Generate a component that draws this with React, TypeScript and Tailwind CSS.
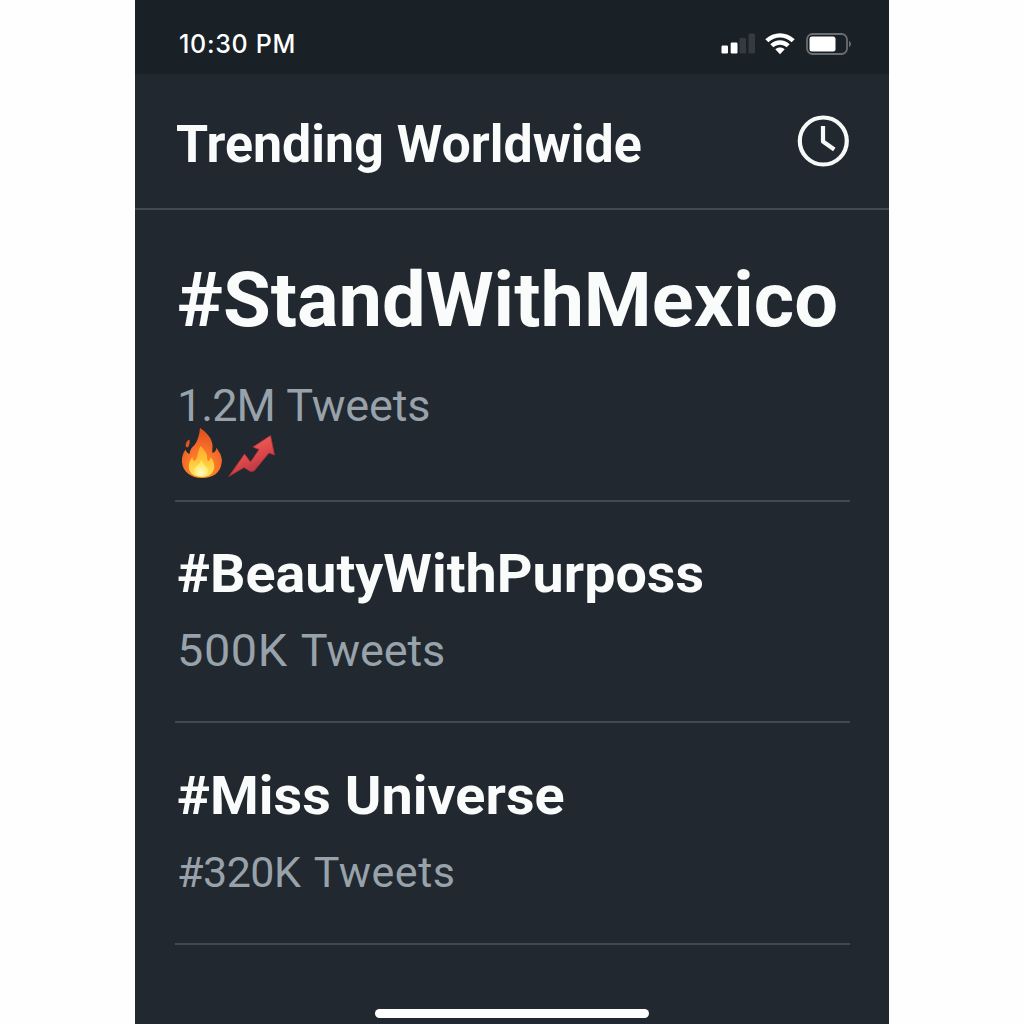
import React from 'react';

const trends = [
    {
        tag: '#StandWithMexico',
        amount: '1.2M',
        rowClass: 'h-[292px] pt-[50px]',
        tagClass: 'text-[76px] leading-[80px] scale-x-[1.021]',
        countClass: 'mt-[41px] text-[45px] tracking-[-0.2px] [word-spacing:1.5px]',
        amountClass: 'tracking-[-1px]',
        hot: true,
    },
    {
        tag: '#BeautyWithPurposs',
        amount: '500K',
        rowClass: 'h-[221px] pt-[43px]',
        tagClass: 'text-[53px] leading-[59px] scale-x-[1.05]',
        countClass: 'mt-[22px] text-[45px] tracking-[-0.1px] [word-spacing:7px]',
        amountClass: 'inline-block origin-left scale-x-[1.04] tracking-[0.6px]',
        hot: false,
    },
    {
        tag: '#Miss Universe',
        amount: '#320K',
        rowClass: 'h-[222px] pt-[43px]',
        tagClass: 'text-[53px] leading-[60px] scale-x-[1.052]',
        countClass: 'mt-[21px] text-[43px] tracking-[0.5px] [word-spacing:3px]',
        amountClass: 'tracking-[-0.5px]',
        hot: false,
    },
];

const FireIcon = () => (
    <svg width="42" height="52" viewBox="0 0 42 52">
        <defs>
            <radialGradient id="flameOuter" cx="0.5" cy="0.85" r="0.8">
                <stop offset="0" stopColor="#ff9d1f" />
                <stop offset="0.55" stopColor="#f8702a" />
                <stop offset="1" stopColor="#e2501f" />
            </radialGradient>
            <linearGradient id="flameInner" x1="0" y1="0" x2="0" y2="1">
                <stop offset="0" stopColor="#ffa62c" />
                <stop offset="0.5" stopColor="#ffc63a" />
                <stop offset="1" stopColor="#ffe65c" />
            </linearGradient>
            <radialGradient id="flameCore" cx="0.5" cy="0.8" r="0.6">
                <stop offset="0" stopColor="#fffbc8" />
                <stop offset="1" stopColor="#ffe65c" />
            </radialGradient>
        </defs>
        <path
            d="M19 1C25 5 31 11 31.500 18C31.700 21 31 24 31.500 26C34 25.500 35.500 23 35.500 20.500C37 24 40 26.500 40.500 31C41 33 41 34 40.500 36.500C39.500 45.500 32 51 21 51C10 51 2 45 1 35.500C0.500 30 2 26 4.500 22.500C5 24.500 6.500 26.500 8.500 27C8.800 23 11 20 13.500 18C16.500 14 18.500 8 19 1Z"
            fill="url(#flameOuter)"
        />
        <path d="M8.500 12.500C9 15 8.600 17 7.500 19.500C6.500 21 5 20.500 4.700 19C4.500 16 6 13.500 8.500 12.500Z" fill="#e8521f" />
        <path
            d="M19.500 19C22 21.500 25.500 25 26 29C26.200 31 26 33 27 34C28.800 33.500 29.500 31.500 29.500 30C32 33 34 37 33 41.500C31.800 47.500 27 50 20.500 50C13.500 50 8.500 46.500 7.800 40.500C7.400 36.500 9 33 11.500 30C11.500 32 12 33.500 13.500 34C16 32.500 16.500 29 17 26C17.500 23.500 18.500 21.500 19.500 19Z"
            fill="url(#flameInner)"
        />
        <path d="M20 33C22 35 23 37.500 25 39.500C27.500 42 28 44.500 26 47C23 50 17 50 14 47C12 44.500 13 41.500 15 39.500C17.500 37.500 19.500 36 20 33Z" fill="url(#flameCore)" />
    </svg>
);

const RisingArrowIcon = () => (
    <svg width="48" height="44" viewBox="0 0 48 44">
        <defs>
            <linearGradient id="arrowRed" x1="0.3" y1="0.1" x2="0.7" y2="0.9">
                <stop offset="0" stopColor="#ee6258" />
                <stop offset="0.5" stopColor="#de4a4c" />
                <stop offset="1" stopColor="#b3343f" />
            </linearGradient>
        </defs>
        <path
            d="M0.800 41.500L16.500 19L22.500 27L31 14.500L25 12L42.500 0.500L46.500 20L41 18L26 36L22.500 36.500L16 32.500Z"
            fill="url(#arrowRed)"
            stroke="#ad3038"
            strokeWidth="0.8"
            strokeLinejoin="round"
        />
    </svg>
);

const StatusIcons = () => (
    <div className="flex items-center">
        <svg width="34" height="22" viewBox="0 0 34 22">
            <rect x="0.500" y="12.500" width="6.500" height="8" rx="1.200" fill="#fff" />
            <rect x="9.700" y="9.500" width="6.800" height="11" rx="1.200" fill="#fff" />
            <rect x="18.500" y="5" width="6.500" height="15.500" rx="1.200" fill="#353a3f" />
            <rect x="27.500" y="0.500" width="6.500" height="20" rx="1.200" fill="#353a3f" />
        </svg>
        <svg width="30" height="22" viewBox="0 0 30 22" className="ml-[10px]">
            <path d="M0.300 6.200C8.500 -1.900 21.500 -1.900 29.700 6.200L26.600 9.300C20.200 3 9.800 3 3.400 9.300Z" fill="#fff" />
            <path d="M5.300 11.200C10.800 5.900 19.200 5.900 24.700 11.200L21.600 14.300C17.900 10.800 12.100 10.800 8.400 14.300Z" fill="#fff" />
            <path d="M10.300 16.200C13 13.800 17 13.800 19.700 16.200L15 21.300Z" fill="#fff" />
        </svg>
        <svg width="46" height="22" viewBox="0 0 46 22" className="ml-[11px]">
            <rect x="1" y="1" width="40" height="20" rx="5.500" fill="none" stroke="#6a6e72" strokeWidth="1.800" />
            <rect x="3.500" y="3.500" width="26" height="15" rx="2.500" fill="#fff" />
            <path d="M43 8C45.600 9 45.600 13 43 14Z" fill="#6a6e72" />
        </svg>
    </div>
);

const ClockIcon = () => (
    <svg width="52" height="52" viewBox="0 0 52 52" fill="none" stroke="#f7f8f8" strokeWidth="4.200" strokeLinejoin="round">
        <circle cx="26.300" cy="26" r="23.500" />
        <path d="M26 11V26.500L37.300 34.500" />
    </svg>
);

const App = () => {
    return (
        <div className="flex h-screen justify-center overflow-hidden bg-[#fefefe] font-['Roboto',sans-serif]">
            <div className="flex h-full w-[754px] flex-col bg-[#21282f]">
                <div className="flex h-[74px] shrink-0 items-center justify-between bg-[#192026] pt-[13px] pr-[37px] pb-0 pl-[44px]">
                    <span className="font-['Inter',sans-serif] text-[25px] leading-[30px] font-medium tracking-[0.7px] text-white">10:30 PM</span>
                    <StatusIcons />
                </div>
                <div className="flex h-[136px] shrink-0 items-center justify-between border-b-2 border-[#42494f] pr-[40px] pl-[41px]">
                    <h1 className="origin-left scale-x-[1.018] pt-[7px] text-[51px] leading-[60px] font-bold text-[#fafbfb]">Trending Worldwide</h1>
                    <ClockIcon />
                </div>
                <div className="flex flex-1 flex-col pr-[39px] pl-[40px]">
                    {trends.map((trend) => (
                        <div key={trend.tag} className={`shrink-0 border-b-2 border-[#42494f] whitespace-nowrap ${trend.rowClass}`}>
                            <h2 className={`ml-[2px] origin-left font-bold text-[#fafbfb] ${trend.tagClass}`}>{trend.tag}</h2>
                            <p className={`pl-[2px] leading-[50px] font-normal text-[#98a2ab] ${trend.countClass}`}>
                                <span className={trend.amountClass}>{trend.amount}</span> Tweets
                            </p>
                            {trend.hot && (
                                <div className="-mt-[4px] flex items-end gap-[5px] pl-[6px]">
                                    <FireIcon />
                                    <RisingArrowIcon />
                                </div>
                            )}
                        </div>
                    ))}
                </div>
                <div className="mb-[6px] h-[9px] w-[274px] shrink-0 self-center rounded-full bg-white" />
            </div>
        </div>
    );
};

export default App;
